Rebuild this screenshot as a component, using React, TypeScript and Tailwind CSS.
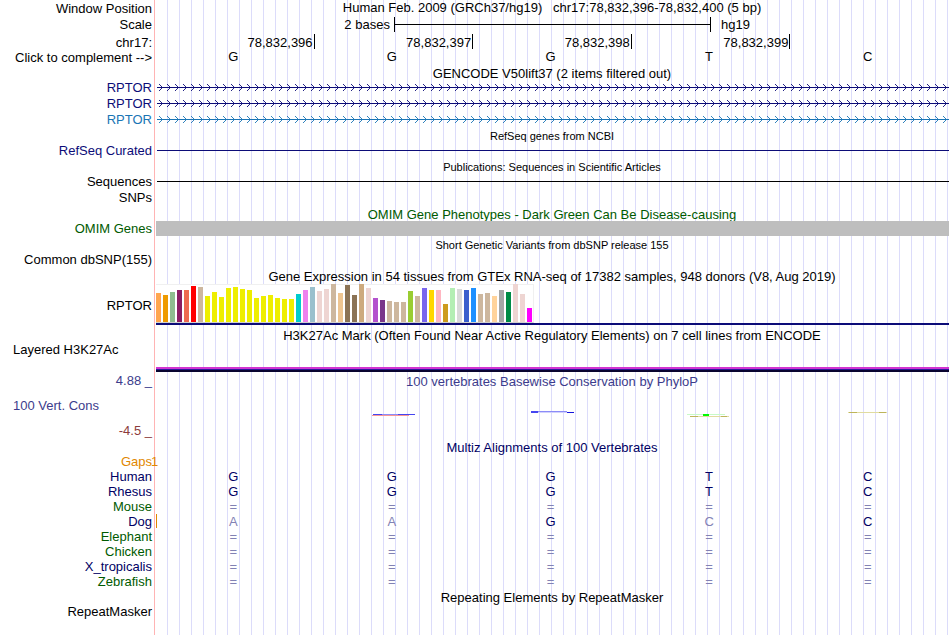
import type { ReactNode } from "react";

const bars: [number, string][] = [
  [29, "#ffa54f"], [27, "#ee9a00"], [30, "#8fbc8f"], [32, "#8b1c62"], [32, "#ee6a50"], [36, "#ff0000"],
  [35, "#cdb79e"], [26, "#eeee00"], [30, "#eeee00"], [25, "#eeee00"], [34, "#eeee00"], [35, "#eeee00"],
  [33, "#eeee00"], [32, "#eeee00"], [24, "#eeee00"], [26, "#eeee00"], [27, "#eeee00"], [24, "#eeee00"],
  [23, "#eeee00"], [23, "#eeee00"], [28, "#00cdcd"], [32, "#ee82ee"], [35, "#9ac0cd"], [31, "#eed5d2"],
  [33, "#eed5d2"], [38, "#cdb79e"], [29, "#eec591"], [37, "#8b7355"], [27, "#8b7355"], [38, "#cdaa7d"],
  [34, "#eed5d2"], [24, "#b452cd"], [22, "#7a378b"], [21, "#cdb79e"], [20, "#cdb79e"], [20, "#cdb79e"],
  [31, "#9acd32"], [26, "#cdb79e"], [34, "#7a67ee"], [32, "#ffd700"], [32, "#ffb6c1"], [18, "#cd9b1d"],
  [34, "#b4eeb4"], [33, "#d9d9d9"], [32, "#3a5fcd"], [34, "#1e90ff"], [28, "#cdb79e"], [29, "#cdb79e"],
  [26, "#ffd39b"], [32, "#a6a6a6"], [30, "#008b45"], [38, "#eed5d2"], [28, "#eed5d2"], [14, "#ff00ff"],
];

const species = [
  { name: "Human", bases: "GGGTC", color: "text-[#000064]" },
  { name: "Rhesus", bases: "GGGTC", color: "text-[#000064]" },
  { name: "Mouse", bases: "=====", color: "text-[#005a00]" },
  { name: "Dog", bases: "AAGCC", color: "text-[#000064]" },
  { name: "Elephant", bases: "=====", color: "text-[#005a00]" },
  { name: "Chicken", bases: "=====", color: "text-[#005a00]" },
  { name: "X_tropicalis", bases: "=====", color: "text-[#000064]" },
  { name: "Zebrafish", bases: "=====", color: "text-[#005a00]" },
];

type RowProps = { h: string; label?: ReactNode; color?: string; align?: string; children?: ReactNode };

function Row({ h, label, color = "text-black", align = "items-center", children }: RowProps) {
  return (
    <div className={`flex ${h}`}>
      <div className={`flex w-[155px] shrink-0 justify-end border-r border-[#ffb4b4] pr-0.5 whitespace-pre ${align} ${color}`}>
        {label}
      </div>
      <div className="min-w-0 flex-1">{children}</div>
    </div>
  );
}

type TitleProps = { h?: string; pad?: string; color?: string; small?: boolean; children: ReactNode };

function Title({ h = "h-[15px]", pad = "pt-0.5", color = "text-black", small = false, children }: TitleProps) {
  return (
    <Row h={h}>
      <h2 className={`flex h-full items-center justify-center whitespace-pre ${pad} ${color} ${small ? "text-[11px]" : ""}`}>
        {children}
      </h2>
    </Row>
  );
}

function Bases({ seq, tone }: { seq: string; tone: (i: number) => string }) {
  return (
    <div className="-ml-px grid grid-cols-5 pr-0.5 text-center">
      {seq.split("").map((b, i) => (
        <span key={i} className={tone(i)}>{b}</span>
      ))}
    </div>
  );
}

function Gene({ id, label, color, stroke }: { id: string; label: string; color: string; stroke: string }) {
  return (
    <Row h="h-4" align="items-start" label={label} color={color}>
      <div className="h-full pl-0.5">
        <svg className="block h-[15px] w-full" aria-hidden="true">
          <defs>
            <pattern id={id} width="8" height="15" patternUnits="userSpaceOnUse">
              <path d="M2 4L5.5 7.5L2 11" fill="none" stroke={stroke} strokeWidth="0.9" />
            </pattern>
          </defs>
          <rect width="100%" height="15" fill={`url(#${id})`} />
          <rect y="7" width="100%" height="1" fill={stroke} />
        </svg>
      </div>
    </Row>
  );
}

export default function App() {
  return (
    <main className="relative flex min-h-screen flex-col bg-white pr-px font-['Liberation_Sans',Arial,sans-serif] text-[13px] leading-[15px]">
      <div className="absolute inset-y-0 right-0 left-[167px] bg-[linear-gradient(to_right,#dcdcfa_1px,transparent_1px)] bg-size-[12px_100%]" />
      <div className="relative flex flex-1 flex-col">
        <Row h="h-[17px]" label="Window Position">
          <h1 className="text-center whitespace-pre">{"Human Feb. 2009 (GRCh37/hg19)   chr17:78,832,396-78,832,400 (5 bp)"}</h1>
        </Row>
        <Row h="h-[17px]" align="items-start" label="Scale">
          <div className="ml-px grid h-[15px] grid-cols-[30%_40%_1fr]">
            <span className="pr-1 text-right">2 bases</span>
            <div className="flex h-full items-center border-x border-black">
              <div className="h-px w-full bg-black" />
            </div>
            <span className="pl-2.5">hg19</span>
          </div>
        </Row>
        <Row h="h-[17px]" label="chr17:">
          <div className="ml-px grid h-full grid-cols-5 text-right">
            {["78,832,396", "78,832,397", "78,832,398", "78,832,399"].map((n) => (
              <div key={n} className="h-[15px] border-r border-black pr-px leading-[17px]">{n}</div>
            ))}
          </div>
        </Row>
        <Row h="h-[14px]" align="items-end" label="Click to complement -->">
          <div className="leading-[11px]">
            <Bases seq="GGGTC" tone={() => "text-black"} />
          </div>
        </Row>
        <Title>GENCODE V50lift37 (2 items filtered out)</Title>
        <Gene id="gene-a" label="RPTOR" color="text-[#0c0c78]" stroke="#0c0c78" />
        <Gene id="gene-b" label="RPTOR" color="text-[#0c0c78]" stroke="#0c0c78" />
        <Gene id="gene-c" label="RPTOR" color="text-[#1a75b5]" stroke="#1a75b5" />
        <Title small>RefSeq genes from NCBI</Title>
        <Row h="h-4" align="items-start" label="RefSeq Curated" color="text-[#0c0c78]">
          <div className="h-full pt-[7px] pl-0.5"><div className="h-px bg-[#0c0c78]" /></div>
        </Row>
        <Title small>Publications: Sequences in Scientific Articles</Title>
        <Row h="h-4" align="items-start" label="Sequences">
          <div className="h-full pt-[7px] pl-0.5"><div className="h-px bg-black" /></div>
        </Row>
        <Row h="h-4" align="items-start" label="SNPs" />
        <Title pad="overflow-hidden pt-0.5" color="text-[#005a00]">OMIM Gene Phenotypes - Dark Green Can Be Disease-causing</Title>
        <Row h="h-4" align="items-start" label="OMIM Genes" color="text-[#005a00]">
          <div className="ml-px h-[15px] bg-[#bebebe]" />
        </Row>
        <Title small>Short Genetic Variants from dbSNP release 155</Title>
        <Row h="h-4" align="items-start" label="Common dbSNP(155)" />
        <Title h="h-4" pad="pt-0">Gene Expression in 54 tissues from GTEx RNA-seq of 17382 samples, 948 donors (V8, Aug 2019)</Title>
        <Row h="h-[43px]" label="RPTOR">
          <div className="ml-px">
            <div className="flex h-[39px] w-[378px] items-end gap-0.5 border-t border-r border-b border-t-[#f0f0f0] border-r-[#f0f0f0] border-b-[#d0d0d0] bg-white">
              {bars.map(([v, c], i) => (
                <div key={i} className="w-[5px] shrink-0" style={{ height: v, background: c }} />
              ))}
            </div>
            <div className="h-0.5 bg-[#0c0c78]" />
          </div>
        </Row>
        <Title h="h-4" pad="pt-0">H3K27Ac Mark (Often Found Near Active Regulatory Elements) on 7 cell lines from ENCODE</Title>
        <Row
          h="h-[30px]"
          align="items-start"
          label={<span className="w-full pl-[13px] leading-[13px]">Layered H3K27Ac</span>}
        >
          <div className="ml-px pt-6">
            <div className="h-0.5 bg-[#d234d2]" />
            <div className="h-px bg-[#2b1a9c]" />
            <div className="h-0.5 bg-[#0a0530]" />
          </div>
        </Row>
        <Row h="h-4" align="items-start" label={"4.88 _"} color="text-[#3c3c8c]">
          <h2 className="flex h-full items-center justify-center text-[#3c3c8c]">100 vertebrates Basewise Conservation by PhyloP</h2>
        </Row>
        <Row
          h="h-[51px]"
          color="text-[#3c3c8c]"
          label={
            <div className="flex h-full w-full flex-col justify-between pt-[9px] pb-0.5">
              <span className="pl-[13px]">100 Vert. Cons</span>
              <span className="text-right text-[#8c3c3c]">-4.5 _</span>
            </div>
          }
        >
          <svg className="block h-full w-full" viewBox="155 389 794 51" preserveAspectRatio="none" aria-hidden="true">
            <path d="M373 414.5H382M398 414.5H415" stroke="#4646f0" />
            <path d="M382 414.5H398" stroke="#8c8cf8" />
            <path d="M372 415.5H409" stroke="#fa9696" />
            <path d="M531 412H538" stroke="#4646f0" strokeWidth="2" />
            <path d="M538 411.5H567" stroke="#8c8cf8" />
            <path d="M538 412.5H567" stroke="#d2d2fc" />
            <path d="M567 412.5H574" stroke="#1414dc" />
            <path d="M687 414.5H725" stroke="#c8fac8" />
            <path d="M690 416.5H729" stroke="#e1dca0" />
            <path d="M690 416.5H698M721 416.5H727" stroke="#bdb45a" />
            <rect x="703" y="414" width="6" height="2" fill="#00fa00" />
            <path d="M848 412.5H887" stroke="#e1dca0" />
            <path d="M849 412.5H857M879 412.5H886" stroke="#bdb45a" />
          </svg>
        </Row>
        <Title pad="pt-0" color="text-[#000064]">Multiz Alignments of 100 Vertebrates</Title>
        <Row h="h-[14px]" align="items-end" label="Gaps" color="text-[#e18700]">
          <span className="relative -ml-1 block leading-[13px] text-[#e18700]">1</span>
        </Row>
        {species.map((s) => (
          <Row key={s.name} h="h-[15px]" label={s.name} color={s.color}>
            <div className="relative">
              {s.name === "Dog" && <div className="absolute top-0 left-px h-[14px] w-px bg-[#e18700]" />}
              <Bases
                seq={s.bases}
                tone={(i) => (s.bases[i] === "GGGTC"[i] ? "text-[#000064]" : "text-[#8282b4]")}
              />
            </div>
          </Row>
        ))}
        <Title>Repeating Elements by RepeatMasker</Title>
        <Row h="h-[15px]" label="RepeatMasker" />
        <Row h="flex-1" />
      </div>
    </main>
  );
}
